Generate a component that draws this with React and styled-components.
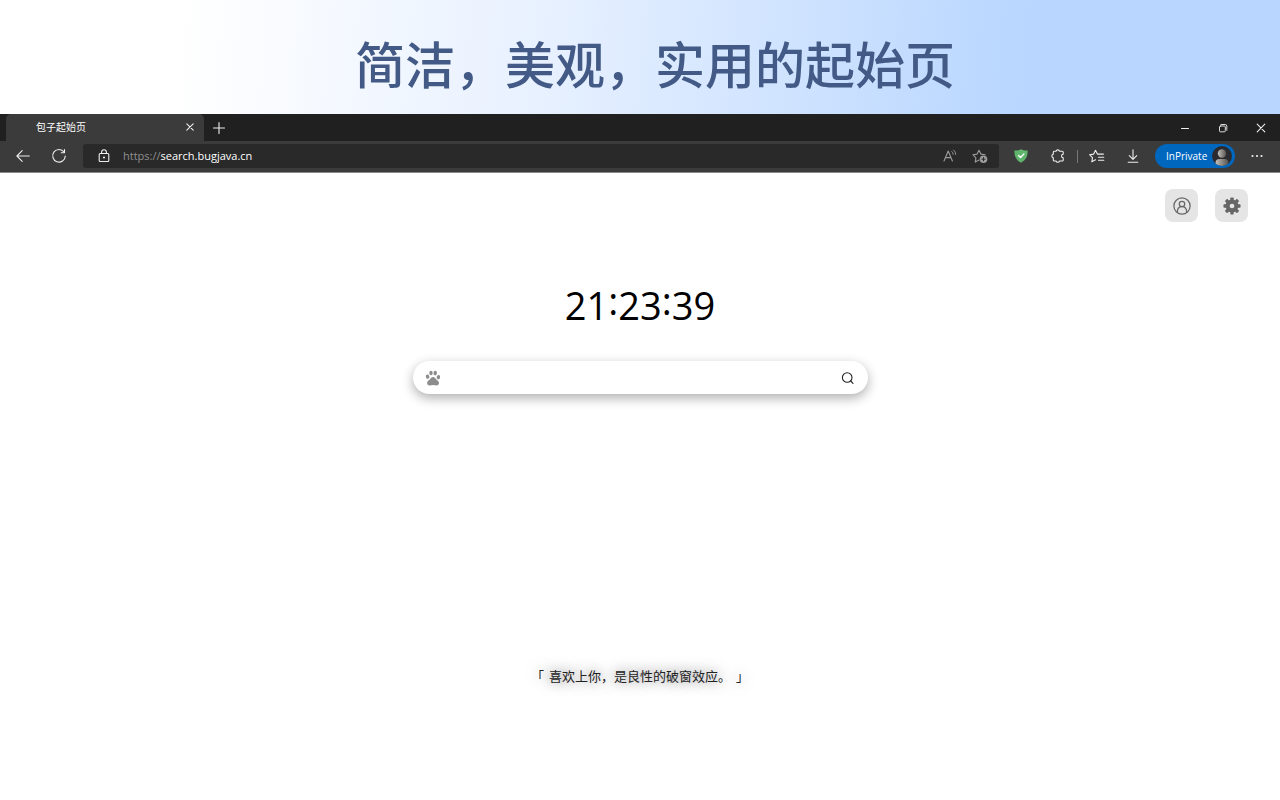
import styled, { createGlobalStyle } from 'styled-components';

const GlobalStyle = createGlobalStyle`
	* {
		box-sizing: border-box;
	}
	html, body, #root {
		height: 100%;
	}
	body {
		margin: 0;
		background: #fff;
		font-family: 'Open Sans', 'Noto Sans CJK SC', sans-serif;
	}
	button, input {
		font: inherit;
		color: inherit;
		border: none;
		background: none;
		padding: 0;
		margin: 0;
		outline: none;
	}
	button {
		cursor: pointer;
	}
`;

const Container = styled.div`
	display: flex;
	flex-direction: column;
	min-height: 100%;
`;

const Banner = styled.header`
	display: flex;
	justify-content: center;
	padding: 26px 0 16px 30px;
	background: linear-gradient(95deg, #fff 14%, #e8f1ff 42%, #b8d6ff 80%);
`;

const Title = styled.h1`
	margin: 0;
	font-family: 'Noto Sans CJK SC', sans-serif;
	font-size: 50px;
	font-weight: 500;
	line-height: 72px;
	color: #425a85;
`;

const Browser = styled.div`
	color: #f2f2f2;
	background: #202020;
`;

const TabStrip = styled.div`
	display: flex;
	align-items: center;
	height: 27px;
	padding-left: 6px;
`;

const Tab = styled.div`
	display: flex;
	align-items: center;
	align-self: stretch;
	justify-content: space-between;
	width: 198px;
	padding: 0 6px 1px 30px;
	border-radius: 5px 5px 0 0;
	background: #3b3b3b;
	color: #fff;
	font-family: 'Noto Sans CJK SC', sans-serif;
	font-size: 10px;
	line-height: 16px;
`;

const IconButton = styled.button`
	display: flex;
	align-items: center;
	justify-content: center;
	flex: none;
	width: ${({ $width }) => $width || 16}px;
	height: 24px;
	color: ${({ $dim }) => ($dim ? '#9b9b9b' : '#eee')};
`;

const WindowButtons = styled.div`
	display: flex;
	margin-left: auto;
`;

const Toolbar = styled.div`
	display: flex;
	align-items: center;
	height: 32px;
	padding: 0 5px 1px;
	background: #3b3b3b;
	border-bottom: 1px solid #8a8a8a;
`;

const AddressBar = styled.div`
	display: flex;
	align-items: center;
	flex: 1;
	height: 24px;
	margin: 0 4px 0 6px;
	padding: 0 4px 0 13px;
	border-radius: 3px;
	background: #292929;
`;

const Address = styled.a`
	flex: 1;
	margin-left: 11px;
	font-size: 11px;
	line-height: 16px;
	color: #fff;
	text-decoration: none;
`;

const Protocol = styled.span`
	color: #8f8f8f;
`;

const Divider = styled.span`
	width: 1px;
	height: 13px;
	margin: 0 1px;
	background: #777;
`;

const Profile = styled.button`
	display: flex;
	align-items: center;
	justify-content: space-between;
	width: 80px;
	height: 24px;
	margin: 0 4px;
	padding: 0 3px 0 11px;
	border-radius: 12px;
	background: #0067bf;
	color: #fff;
	font-size: 10px;
	line-height: 16px;
`;

const Page = styled.main`
	display: flex;
	flex: 1;
	flex-direction: column;
	align-items: center;
	padding: 16px 32px 111px;
`;

const Actions = styled.div`
	display: flex;
	align-self: flex-end;
	gap: 17px;
`;

const ActionButton = styled.button`
	display: flex;
	align-items: center;
	justify-content: center;
	width: 33px;
	height: 33px;
	border-radius: 8px;
	background: #e5e5e5;
	color: #666;
`;

const Clock = styled.time`
	margin-top: 56px;
	font-size: 38px;
	line-height: 54px;
	color: #000;
`;

const Colon = styled.span`
	vertical-align: 5px;
	line-height: 1;
`;

const SearchBox = styled.form`
	display: flex;
	align-items: center;
	width: 455px;
	max-width: 100%;
	height: 33px;
	margin-top: 29px;
	padding: 0 12px;
	border-radius: 17px;
	background: #fff;
	box-shadow: 0 4px 12px rgba(0, 0, 0, 0.32);
`;

const SearchInput = styled.input`
	flex: 1;
	min-width: 0;
	height: 100%;
	margin: 0 8px;
	font-size: 13px;
	color: #222;
`;

const Quote = styled.p`
	display: flex;
	gap: 5px;
	margin: auto 0 0;
	font-family: 'Noto Sans CJK SC', sans-serif;
	font-size: 13px;
	line-height: 26px;
	color: #222;
	text-shadow: 0 0 13px rgba(0, 0, 0, 0.6);
`;

const Icon = ({ size = 16, children }) => (
	<svg
		width={size}
		height={size}
		viewBox='0 0 16 16'
		fill='none'
		stroke='currentColor'
		strokeWidth='1.1'
		strokeLinecap='round'
		strokeLinejoin='round'
		aria-hidden='true'
	>
		{children}
	</svg>
);

// eight teeth around the hub
const teeth = [0, 45, 90, 135, 180, 225, 270, 315];

const App = () => {
	return (
		<Container>
			<GlobalStyle />
			<Banner>
				<Title>简洁，美观，实用的起始页</Title>
			</Banner>
			<Browser>
				<TabStrip>
					<Tab>
						包子起始页
						<IconButton aria-label='关闭标签页'>
							<Icon>
								<path d='M4.8 4.8l6.4 6.4M11.2 4.8l-6.4 6.4' />
							</Icon>
						</IconButton>
					</Tab>
					<IconButton $width={30} aria-label='新建标签页'>
						<Icon>
							<path d='M8 2.5v11M2.5 8h11' />
						</Icon>
					</IconButton>
					<WindowButtons>
						<IconButton $width={38} aria-label='最小化'>
							<Icon>
								<path d='M4.5 8.5h7' />
							</Icon>
						</IconButton>
						<IconButton $width={38} aria-label='还原'>
							<Icon>
								<rect x='4.5' y='6' width='5.8' height='5.8' rx='1' strokeWidth='.9' />
								<path d='M6 4.5h4.2q1.6 0 1.6 1.6v4.2' strokeWidth='.9' />
							</Icon>
						</IconButton>
						<IconButton $width={38} aria-label='关闭'>
							<Icon>
								<path d='M4.2 4.2l7.6 7.6M11.8 4.2l-7.6 7.6' />
							</Icon>
						</IconButton>
					</WindowButtons>
				</TabStrip>
				<Toolbar>
					<IconButton $width={36} aria-label='返回'>
						<Icon>
							<path d='M14.3 8H2M7.2 2.7L1.9 8l5.3 5.3' />
						</Icon>
					</IconButton>
					<IconButton $width={36} aria-label='刷新'>
						<Icon>
							<path d='M13.2 4.2A6.3 6.3 0 1 0 14.3 8' />
							<path d='M13.5 1.5v3.2h-3.2' />
						</Icon>
					</IconButton>
					<AddressBar>
						<IconButton aria-label='站点信息'>
							<Icon>
								<rect x='3.2' y='5.5' width='9.6' height='8' rx='1' />
								<path d='M5.6 5.5V4.2a2.4 2.4 0 0 1 4.8 0v1.3' />
								<circle cx='8' cy='9.5' r='.5' fill='currentColor' />
							</Icon>
						</IconButton>
						<Address href='#'>
							<Protocol>https://</Protocol>search.bugjava.cn
						</Address>
						<IconButton $width={30} $dim aria-label='朗读'>
							<Icon>
								<path d='M2 13L6.2 3l4.2 10M3.5 9.6h5.4' />
								<path d='M9.8 3.5q1.3 1 1.4 2.9M11.6 2q2 1.6 2.2 4.4' strokeWidth='.9' />
							</Icon>
						</IconButton>
						<IconButton $width={30} $dim aria-label='添加到收藏夹'>
							<Icon>
								<path d='M7 12.1l-3.8 2 .7-4.3L.9 6.7l4.2-.6L7 2.2l1.9 3.9 4.3.6' />
								<circle cx='11.5' cy='11.2' r='3.8' fill='currentColor' stroke='none' />
								<path d='M11.5 9.6v3.2M9.9 11.2h3.2' stroke='#292929' strokeWidth='1' />
							</Icon>
						</IconButton>
					</AddressBar>
					<IconButton $width={36} aria-label='广告拦截'>
						<Icon>
							<path
								d='M8 1.3c1.8 1 3.9 1.4 6.7 1.3 0 5.8-1.6 9.3-6.7 12.2C2.9 11.900 1.300 8.400 1.300 2.600 4.100 2.700 6.200 2.300 8 1.300z'
								fill='#5fb56b'
								stroke='none'
							/>
							<path d='M5.500 7.400l2 2 3.400-3.500' stroke='#fff' strokeWidth='1.400' />
						</Icon>
					</IconButton>
					<IconButton $width={37} aria-label='扩展'>
						<Icon>
							<path d='M4.300 3.200h1.700a1.900 1.900 0 0 1 3.600 0h2.600q1 0 1 1v2.100a1.700 1.700 0 0 0 0 3.400V12q0 1-1 1H9.600a1.900 1.900 0 0 1-3.600 0H4.300q-1 0-1-1V9.900a1.900 1.900 0 0 1 0-3.700v-2q0-1 1-1z' />
						</Icon>
					</IconButton>
					<Divider />
					<IconButton $width={36} aria-label='收藏夹'>
						<Icon>
							<path d='M6.500 11.800l-3.700 2 .7-4.200L.6 6.700l4.100-.6 1.800-3.800 1.900 3.800h6M9.500 9.200h5.300M9.500 12.200h5.300' />
						</Icon>
					</IconButton>
					<IconButton $width={36} aria-label='下载'>
						<Icon>
							<path d='M8 1.800v9.400M4.300 7.600L8 11.300l3.700-3.700M3.200 14.300h9.600' />
						</Icon>
					</IconButton>
					<Profile>
						InPrivate
						<svg width='20' height='20' viewBox='0 0 20 20' aria-hidden='true'>
							<defs>
								<linearGradient id='avatar' x1='0' x2='1'>
									<stop offset='0' stopColor='#c4c0bc' />
									<stop offset='1' stopColor='#55524f' />
								</linearGradient>
								<clipPath id='round'>
									<circle cx='10' cy='10' r='10' />
								</clipPath>
							</defs>
							<g clipPath='url(#round)'>
								<rect width='20' height='20' fill='#2b2b2f' />
								<circle cx='10' cy='7.5' r='4.2' fill='url(#avatar)' />
								<path d='M3.5 20v-3q0-4 4-4h5q4 0 4 4v3z' fill='url(#avatar)' />
							</g>
						</svg>
					</Profile>
					<IconButton $width={36} aria-label='设置及其他'>
						<Icon>
							<g fill='currentColor' stroke='none'>
								<circle cx='3.5' cy='8' r='1.1' />
								<circle cx='8' cy='8' r='1.1' />
								<circle cx='12.5' cy='8' r='1.1' />
							</g>
						</Icon>
					</IconButton>
				</Toolbar>
			</Browser>
			<Page>
				<Actions>
					<ActionButton aria-label='用户'>
						<Icon size={18}>
							<circle cx='8' cy='8' r='7.2' />
							<circle cx='8' cy='6.2' r='2.4' />
							<path d='M3.9 13.2c0-3 1.7-4.6 4.1-4.6s4.1 1.6 4.1 4.6' />
						</Icon>
					</ActionButton>
					<ActionButton aria-label='设置'>
						<Icon size={18}>
							<circle cx='8' cy='8' r='3.9' strokeWidth='3.6' />
							{teeth.map((angle) => (
								<rect
									key={angle}
									x='6.5'
									y='.4'
									width='3'
									height='3.2'
									rx='.7'
									fill='currentColor'
									stroke='none'
									transform={`rotate(${angle} 8 8)`}
								/>
							))}
						</Icon>
					</ActionButton>
				</Actions>
				<Clock>
					21<Colon>:</Colon>23<Colon>:</Colon>39
				</Clock>
				<SearchBox onSubmit={(e) => e.preventDefault()}>
					<Icon>
						<g fill='#8c8c8c' stroke='none'>
							<ellipse cx='2.6' cy='6.6' rx='1.7' ry='2.2' transform='rotate(-12 2.6 6.6)' />
							<ellipse cx='6' cy='3' rx='1.7' ry='2.3' />
							<ellipse cx='10.2' cy='3.1' rx='1.7' ry='2.3' transform='rotate(10 10.2 3.1)' />
							<ellipse cx='13.4' cy='7.2' rx='1.7' ry='2.2' transform='rotate(12 13.4 7.2)' />
							<path d='M8 6.9c1.6 0 2.2 1.300 3.300 2.500 1.200 1.200 2.700 1.900 2.700 3.700 0 1.600-1.200 2.300-2.600 2.300-1.200 0-2-.3-3.300-.3s-2.200.3-3.400.3c-1.500 0-2.600-.9-2.600-2.500 0-1.700 1.500-2.300 2.700-3.500C5.900 8.200 6.500 6.900 8 6.900z' />
						</g>
					</Icon>
					<SearchInput type='text' aria-label='搜索内容' />
					<IconButton aria-label='搜索'>
						<Icon>
							<g stroke='#222'>
								<circle cx='7.2' cy='7.5' r='4.8' />
								<path d='M10.7 11l2.3 2.3' />
							</g>
						</Icon>
					</IconButton>
				</SearchBox>
				<Quote>
					<span>「</span>
					<span>喜欢上你，是良性的破窗效应。</span>
					<span>」</span>
				</Quote>
			</Page>
		</Container>
	);
};
export default App;
